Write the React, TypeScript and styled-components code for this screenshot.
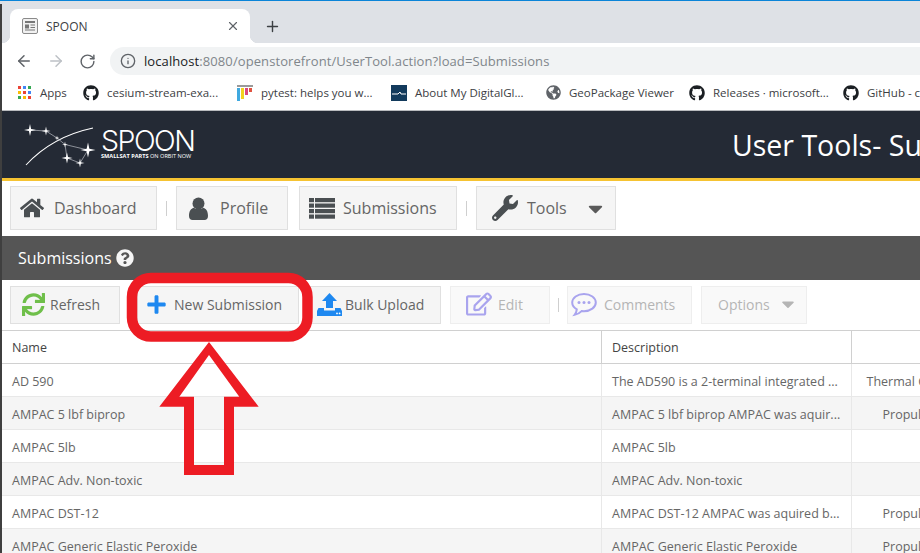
import React from 'react';
import styled, { createGlobalStyle } from 'styled-components';
import { FaCaretDown, FaGithub, FaGlobeAmericas, FaHome, FaPlus, FaQuestionCircle, FaRegEdit, FaSync, FaWrench } from 'react-icons/fa';
import { ArrowLeft, ArrowRight, Info, RotateCw, X, Plus } from 'lucide-react';

const GlobalStyle = createGlobalStyle`
  html, body {
    margin: 0;
    padding: 0;
    width: 920px;
    height: 553px;
    overflow: hidden;
    background: #fff;
    font-family: "Open Sans", "Noto Sans", sans-serif;
  }
  * { box-sizing: border-box; }
`;

const Screen = styled.div`
  position: relative;
  width: 920px;
  height: 553px;
  overflow: hidden;
  border-top: 1px solid #0a84d8;
  &::before {
    content: '';
    position: absolute;
    left: 0;
    top: 3px;
    bottom: 0;
    width: 2px;
    background: #3f3f3f;
    z-index: 2;
  }
`;

const TabStrip = styled.div`
  height: 42px;
  background: #dee1e6;
  display: flex;
  align-items: flex-end;
  padding-left: 10px;
`;

const Tab = styled.div`
  position: relative;
  width: 240px;
  height: 34px;
  background: #fff;
  border-radius: 8px 8px 0 0;
  display: flex;
  align-items: center;
  padding: 0 10px 0 12px;
  color: #3c4043;
  font-size: 12px;
  &::before,
  &::after {
    content: '';
    position: absolute;
    bottom: 0;
    width: 8px;
    height: 8px;
  }
  &::before {
    left: -8px;
    background: radial-gradient(circle at 0 0, #dee1e6 8px, #fff 8.5px);
  }
  &::after {
    right: -8px;
    background: radial-gradient(circle at 100% 0, #dee1e6 8px, #fff 8.5px);
  }
`;

const TabTitle = styled.span`
  margin-left: 8px;
  flex: 1;
`;

const NewTab = styled.div`
  width: 44px;
  height: 34px;
  display: flex;
  align-items: center;
  justify-content: center;
  color: #3c4043;
`;

const AddressRow = styled.div`
  height: 32px;
  display: flex;
  align-items: center;
  padding: 4px 0 0 15px;
  gap: 14px;
  color: #5f6368;
`;

const AddressBar = styled.div`
  flex: 1;
  height: 28px;
  background: #f1f3f4;
  border-radius: 14px 0 0 14px;
  display: flex;
  align-items: center;
  padding-left: 10px;
  font-size: 13px;
  letter-spacing: 0.09px;
  color: #80868b;
`;

const Host = styled.span`
  margin-left: 8px;
  color: #202124;
`;

const BookmarkRow = styled.div`
  height: 35px;
  display: flex;
  align-items: center;
  padding-left: 18px;
  white-space: nowrap;
  font-size: 11.5px;
  color: #3c4043;
  overflow: hidden;
`;

const Bookmark = styled.div<{ $width: number }>`
  flex: none;
  width: ${({ $width }) => $width}px;
  display: flex;
  align-items: center;
  gap: 8px;
`;

const AppsGrid = styled.div`
  width: 14px;
  height: 14px;
  display: grid;
  grid-template-columns: repeat(3, 3px);
  grid-auto-rows: 3px;
  gap: 2px;
`;

const AppsDot = styled.span<{ $color: string }>`
  background: ${({ $color }) => $color};
`;

const Divider = styled.div`
  height: 1px;
  background: #b9bbbe;
`;

const Header = styled.div`
  height: 67px;
  background: #242a35;
  display: flex;
  align-items: center;
  justify-content: space-between;
  padding-left: 24px;
  white-space: nowrap;
  overflow: hidden;
`;

const Logo = styled.div`
  display: flex;
  align-items: center;
  gap: 1px;
`;

const LogoWords = styled.div`
  display: flex;
  flex-direction: column;
  color: #fff;
`;

const LogoName = styled.div`
  font-family: "Inter", sans-serif;
  font-weight: 300;
  font-size: 28.5px;
  line-height: 23px;
  letter-spacing: -1.5px;
`;

const LogoTag = styled.div`
  font-size: 5.6px;
  line-height: 7px;
  font-weight: 700;
  margin-top: 1px;
`;

const LogoTagLight = styled.span`
  font-weight: 400;
`;

const PageTitle = styled.div`
  width: 188px;
  overflow: hidden;
  color: #fff;
  font-size: 28.5px;
  line-height: 40px;
`;

const AccentLine = styled.div`
  height: 3px;
  background: #f6c332;
`;

const NavRow = styled.div`
  height: 55px;
  display: flex;
  align-items: center;
  padding: 0 0 1px 10px;
`;

const NavButton = styled.div<{ $width: number; $pad: number; $iconGap: number }>`
  width: ${({ $width }) => $width}px;
  height: 44px;
  background: #f5f5f5;
  border: 1px solid #e0e0e0;
  display: flex;
  align-items: center;
  gap: ${({ $iconGap }) => $iconGap}px;
  padding-left: ${({ $pad }) => $pad}px;
  color: #666;
  font-size: 16px;
`;

const BarSep = styled.span<{ $width: number; $height: number }>`
  flex: none;
  width: ${({ $width }) => $width}px;
  display: flex;
  justify-content: center;
  &::before {
    content: '';
    width: 1px;
    height: ${({ $height }) => $height}px;
    background: #cfcfcf;
  }
`;

const Spacer = styled.span<{ $width: number }>`
  flex: none;
  width: ${({ $width }) => $width}px;
`;

const Caret = styled.span`
  margin-left: 8px;
  display: flex;
`;

const PanelTitle = styled.div`
  height: 44px;
  background: #555;
  color: #fff;
  display: flex;
  align-items: center;
  gap: 4px;
  padding-left: 18px;
  font-size: 16px;
`;

const Toolbar = styled.div`
  height: 51px;
  display: flex;
  align-items: center;
  padding-left: 10px;
  border-bottom: 1px solid #d0d0d0;
`;

const ToolButton = styled.div<{ $width: number; $pad: number; $gap: number; $off?: boolean }>`
  flex: none;
  width: ${({ $width }) => $width}px;
  height: 38px;
  background: ${({ $off }) => ($off ? '#f9f9f9' : '#f5f5f5')};
  border: 1px solid ${({ $off }) => ($off ? '#eeeeee' : '#e0e0e0')};
  display: flex;
  align-items: center;
  gap: ${({ $gap }) => $gap}px;
  padding: 0 0 2px ${({ $pad }) => $pad}px;
  color: ${({ $off }) => ($off ? '#b5b5b5' : '#666')};
  font-size: 14px;
  white-space: nowrap;
`;

const Row = styled.div<{ $shaded?: boolean; $head?: boolean }>`
  height: 33px;
  display: grid;
  grid-template-columns: 602px 250px 125px;
  align-items: stretch;
  background: ${({ $shaded }) => ($shaded ? '#f5f5f5' : '#fff')};
  border-bottom: 1px solid ${({ $head }) => ($head ? '#d0d0d0' : '#e8e8e8')};
`;

const Cell = styled.div<{ $head?: boolean; $inset: number }>`
  display: flex;
  align-items: center;
  padding: ${({ $head }) => ($head ? 0 : 2)}px 0 0 ${({ $inset }) => $inset}px;
  font-size: 12.5px;
  white-space: nowrap;
  overflow: hidden;
  color: ${({ $head }) => ($head ? '#444' : '#666')};
  border-right: 1px solid ${({ $head }) => ($head ? '#d0d0d0' : '#e8e8e8')};
`;

const CategoryCell = styled(Cell)`
  justify-content: center;
`;

const Annotation = styled.svg`
  position: absolute;
  left: 0;
  top: -1px;
  pointer-events: none;
`;

const PageIcon = () => (
  <svg width="16" height="16" viewBox="0 0 16 16">
    <rect x="0.5" y="0.5" width="15" height="15" rx="1.5" fill="#f1f1f1" stroke="#8a8a8a" />
    <rect x="3" y="3" width="10" height="2" fill="#777" />
    <rect x="3" y="6.5" width="4" height="4" fill="#777" />
    <path d="M8.5 7h4.5M8.5 9.5h4.5M3 12h10" stroke="#777" />
  </svg>
);

const PytestIcon = () => (
  <svg width="16" height="16" viewBox="0 0 16 16">
    <rect x="0" y="0" width="16" height="2" fill="#9a9a9a" />
    <rect x="0" y="3" width="3" height="13" fill="#3fa9e0" />
    <rect x="4" y="3" width="3" height="11" fill="#f2d21f" />
    <rect x="8" y="3" width="3" height="7" fill="#d9477f" />
    <rect x="12" y="3" width="3" height="4" fill="#e0523f" />
  </svg>
);

const DigitalGlobeTile = () => (
  <svg width="16" height="16" viewBox="0 0 16 16">
    <rect width="16" height="16" fill="#123a5c" />
    <path d="M1 9h6l2-2 1 2h5" fill="none" stroke="#fff" strokeWidth="1" />
  </svg>
);

const Star = ({ x, y, r }: { x: number; y: number; r: number }) => {
  const k = r * 0.18;
  return (
    <path
      d={`M${x} ${y - r}L${x + k} ${y - k}L${x + r} ${y}L${x + k} ${y + k}L${x} ${y + r}L${x - k} ${y + k}L${x - r} ${y}L${x - k} ${y - k}Z`}
      fill="#fff"
    />
  );
};

const LogoMark = () => (
  <svg width="76" height="46" viewBox="24 122 76 46">
    <path d="M26 165C 38 152, 60 135, 93 128" fill="none" stroke="#fff" strokeWidth="1.1" />
    <path d="M30 130L46 131L57 138L65 144.5L88 150L80 163L67 158L65 144.5" fill="none" stroke="#b9bcc3" strokeWidth="0.7" />
    <Star x={30} y={130} r={6} />
    <Star x={46} y={131} r={4.5} />
    <Star x={57} y={138} r={2.5} />
    <Star x={65} y={144.5} r={3} />
    <Star x={88} y={150} r={7.5} />
    <Star x={67} y={158} r={5.5} />
    <Star x={80} y={163} r={4.5} />
  </svg>
);

const UserIcon = () => (
  <svg width="19" height="23" viewBox="0 0 19 23">
    <circle cx="9.5" cy="6.5" r="6" fill="#4a4f52" />
    <path d="M0 19C0 14 2 11.5 5 10.8C6 12.5 13 12.5 14 10.8C17 11.5 19 14 19 19C19 21.5 17.5 23 15.5 23H3.5C1.5 23 0 21.5 0 19Z" fill="#4a4f52" />
  </svg>
);

const ListIcon = () => (
  <svg width="26" height="21" viewBox="0 0 26 21">
    {[0, 5.5, 11, 16.5].map((y) => (
      <g key={y} fill="#4a4f52">
        <rect x="0" y={y} width="5" height="4.2" />
        <rect x="6" y={y} width="20" height="4.2" />
      </g>
    ))}
  </svg>
);

const BulkUploadIcon = () => (
  <svg width="25" height="23" viewBox="0 0 25 23">
    <path d="M12.5 0L20 8H16V15H9V8H5Z" fill="#1e88f0" />
    <path d="M1.5 15H7V17.5H18V15H23.5L25 18V23H0V18Z" fill="#1e88f0" />
    <circle cx="20" cy="20.4" r="0.9" fill="#fff" />
    <circle cx="22.6" cy="20.4" r="0.9" fill="#fff" />
  </svg>
);

const CommentIcon = () => (
  <svg width="26" height="25" viewBox="0 0 26 25">
    <path
      d="M13 2C6.4 2 1.2 5.9 1.2 10.6C1.2 13.4 3 15.8 5.8 17.4C5.6 19.4 4.8 21.3 3.6 22.8C6.2 22.4 8.8 21 10.6 19.1C11.4 19.2 12.2 19.2 13 19.2C19.6 19.2 24.8 15.3 24.8 10.6C24.8 5.9 19.6 2 13 2Z"
      fill="none"
      stroke="#a9a4ee"
      strokeWidth="2"
    />
    <circle cx="8" cy="10.6" r="1.5" fill="#a9a4ee" />
    <circle cx="13" cy="10.6" r="1.5" fill="#a9a4ee" />
    <circle cx="18" cy="10.6" r="1.5" fill="#a9a4ee" />
  </svg>
);

const rows: Array<[string, string, string]> = [
  ['AD 590', 'The AD590 is a 2-terminal integrated ...', 'Thermal Control'],
  ['AMPAC 5 lbf biprop', 'AMPAC 5 lbf biprop AMPAC was aquir...', 'Propulsion'],
  ['AMPAC 5lb', 'AMPAC 5lb', ''],
  ['AMPAC Adv. Non-toxic', 'AMPAC Adv. Non-toxic', ''],
  ['AMPAC DST-12', 'AMPAC DST-12 AMPAC was aquired b...', 'Propulsion'],
  ['AMPAC Generic Elastic Peroxide', 'AMPAC Generic Elastic Peroxide', 'Propulsion'],
];

const appsColors = ['#ea4335', '#4285f4', '#34a853', '#fbbc04', '#ea4335', '#4285f4', '#34a853', '#fbbc04', '#ea4335'];

const App: React.FC = () => {
  return (
    <Screen>
      <GlobalStyle />
      <TabStrip>
        <Tab>
          <PageIcon />
          <TabTitle>SPOON</TabTitle>
          <X size={14} strokeWidth={2} color="#5f6368" />
        </Tab>
        <NewTab>
          <Plus size={17} strokeWidth={2} />
        </NewTab>
      </TabStrip>
      <AddressRow>
        <ArrowLeft size={18} strokeWidth={2} />
        <ArrowRight size={18} strokeWidth={2} color="#bdc1c6" />
        <RotateCw size={17} strokeWidth={2} />
        <AddressBar>
          <Info size={16} strokeWidth={2} color="#5f6368" />
          <Host>localhost</Host>:8080/openstorefront/UserTool.action?load=Submissions
        </AddressBar>
      </AddressRow>
      <BookmarkRow>
        <Bookmark $width={65}>
          <AppsGrid>
            {appsColors.map((color, index) => (
              <AppsDot key={index} $color={color} />
            ))}
          </AppsGrid>
          Apps
        </Bookmark>
        <Bookmark $width={154}>
          <FaGithub size={16} color="#1b1f23" />
          cesium-stream-exa...
        </Bookmark>
        <Bookmark $width={154}>
          <PytestIcon />
          pytest: helps you w...
        </Bookmark>
        <Bookmark $width={155}>
          <DigitalGlobeTile />
          About My DigitalGl...
        </Bookmark>
        <Bookmark $width={143}>
          <FaGlobeAmericas size={15} color="#5f6368" />
          GeoPackage Viewer
        </Bookmark>
        <Bookmark $width={154}>
          <FaGithub size={16} color="#1b1f23" />
          Releases · microsoft...
        </Bookmark>
        <Bookmark $width={90}>
          <FaGithub size={16} color="#1b1f23" />
          GitHub - c
        </Bookmark>
      </BookmarkRow>
      <Divider />
      <Header>
        <Logo>
          <LogoMark />
          <LogoWords>
            <LogoName>SPOON</LogoName>
            <LogoTag>
              SMALLSAT PARTS <LogoTagLight>ON ORBIT NOW</LogoTagLight>
            </LogoTag>
          </LogoWords>
        </Logo>
        <PageTitle>User Tools- Submissions</PageTitle>
      </Header>
      <AccentLine />
      <NavRow>
        <NavButton $width={147} $pad={9} $iconGap={10}>
          <FaHome size={24} color="#4a4f52" />
          Dashboard
        </NavButton>
        <BarSep $width={19} $height={15} />
        <NavButton $width={112} $pad={12} $iconGap={12}>
          <UserIcon />
          Profile
        </NavButton>
        <Spacer $width={11} />
        <NavButton $width={158} $pad={9} $iconGap={8}>
          <ListIcon />
          Submissions
        </NavButton>
        <BarSep $width={19} $height={15} />
        <NavButton $width={140} $pad={15} $iconGap={9}>
          <FaWrench size={26} color="#4a4f52" />
          Tools
          <Caret>
            <FaCaretDown size={23} color="#5a5a5a" />
          </Caret>
        </NavButton>
      </NavRow>
      <PanelTitle>
        Submissions
        <FaQuestionCircle size={18} color="#f5f5f5" />
      </PanelTitle>
      <Toolbar>
        <ToolButton $width={110} $pad={11} $gap={5}>
          <FaSync size={23} color="#6fbf4a" />
          Refresh
        </ToolButton>
        <Spacer $width={17} />
        <ToolButton $width={162} $pad={8} $gap={7}>
          <FaPlus size={21} color="#1e88f0" />
          New Submission
        </ToolButton>
        <Spacer $width={11} />
        <ToolButton $width={131} $pad={6} $gap={3}>
          <BulkUploadIcon />
          Bulk Upload
        </ToolButton>
        <Spacer $width={9} />
        <ToolButton $width={100} $off $pad={15} $gap={6}>
          <FaRegEdit size={26} color="#a9a4ee" />
          Edit
        </ToolButton>
        <BarSep $width={17} $height={14} />
        <ToolButton $width={125} $off $pad={3} $gap={7}>
          <CommentIcon />
          Comments
        </ToolButton>
        <Spacer $width={9} />
        <ToolButton $width={106} $off $pad={16} $gap={8}>
          Options
          <FaCaretDown size={20} color="#b5b5b5" />
        </ToolButton>
      </Toolbar>
      <Row $head>
        <Cell $head $inset={12}>Name</Cell>
        <Cell $head $inset={10}>Description</Cell>
        <Cell $head $inset={0} />
      </Row>
      {rows.map(([name, description, category], index) => (
        <Row key={name} $shaded={index % 2 === 1}>
          <Cell $inset={12}>{name}</Cell>
          <Cell $inset={10}>{description}</Cell>
          <CategoryCell $inset={0}>{category}</CategoryCell>
        </Row>
      ))}
      <Annotation width="920" height="553" viewBox="0 0 920 553">
        <rect x="132" y="278" width="175.5" height="58.5" rx="19" fill="none" stroke="#ed1c24" strokeWidth="10.5" />
        <path
          d="M209 342L258.7 406.7H234V475H184V406.7H159.3ZM209 355L179.3 396.7H194V465H224V396.7H239.3Z"
          fill="#ed1c24"
          fillRule="evenodd"
        />
      </Annotation>
    </Screen>
  );
};

export default App;
